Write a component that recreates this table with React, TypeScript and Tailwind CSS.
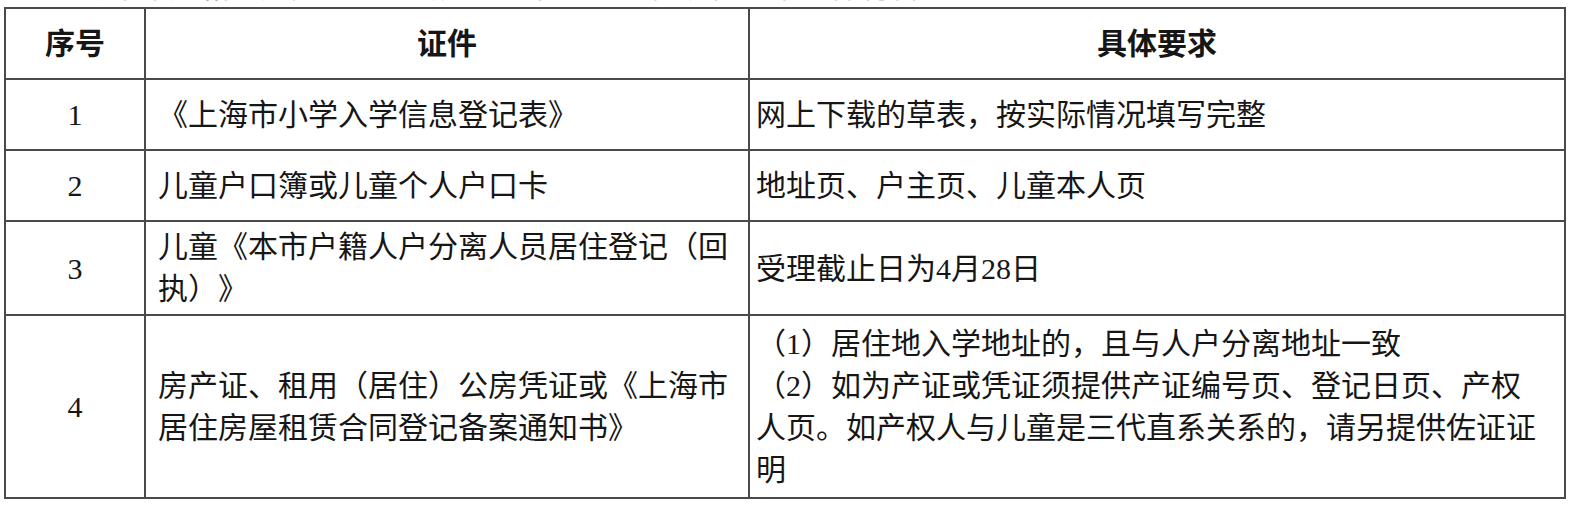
import React from "react";

const font = { fontFamily: '"Liberation Serif", "Noto Sans CJK SC", serif' };

function Cell({
  children,
  className = "",
}: {
  children: React.ReactNode;
  className?: string;
}) {
  return (
    <div
      className={
        "flex items-center border-r-2 border-b-2 border-[#4a4a4a] whitespace-nowrap " +
        className
      }
    >
      {children}
    </div>
  );
}

export default function App() {
  return (
    <div
      className="w-[1577px] h-[506px] bg-white text-[#161616] text-[30px] overflow-hidden [text-spacing-trim:space-all]"
      style={font}
    >
      <div className="h-[7px] overflow-hidden">
        <div className="mt-[-28px] ml-[20px] leading-[30px] whitespace-nowrap text-[#666]">
          二、持本市户籍人户分离的适龄儿童入学登记时需提供以下证件材料
        </div>
      </div>
      <div className="ml-[4px] w-[1562px] border-l-2 border-t-2 border-[#4a4a4a] grid grid-cols-[140px_604px_816px] grid-rows-[71px_71px_71px_94px_183px]">
        {/* header */}
        <Cell className="justify-center font-bold">序号</Cell>
        <Cell className="justify-center font-bold">证件</Cell>
        <Cell className="justify-center font-bold">具体要求</Cell>

        {/* row 1 */}
        <Cell className="justify-center">1</Cell>
        <Cell className="pl-[12px]">《上海市小学入学信息登记表》</Cell>
        <Cell className="pl-[6px]">网上下载的草表，按实际情况填写完整</Cell>

        {/* row 2 */}
        <Cell className="justify-center">2</Cell>
        <Cell className="pl-[12px]">儿童户口簿或儿童个人户口卡</Cell>
        <Cell className="pl-[6px]">地址页、户主页、儿童本人页</Cell>

        {/* row 3 */}
        <Cell className="justify-center">3</Cell>
        <Cell className="pl-[12px]">
          <div className="leading-[42px]">
            <div>儿童《本市户籍人户分离人员居住登记（回</div>
            <div>执）》</div>
          </div>
        </Cell>
        <Cell className="pl-[6px]">受理截止日为4月28日</Cell>

        {/* row 4 */}
        <Cell className="justify-center">4</Cell>
        <Cell className="pl-[12px]">
          <div className="leading-[42px]">
            <div>房产证、租用（居住）公房凭证或《上海市</div>
            <div>居住房屋租赁合同登记备案通知书》</div>
          </div>
        </Cell>
        <Cell className="pl-[6px]">
          <div className="leading-[42px]">
            <div>（1）居住地入学地址的，且与人户分离地址一致</div>
            <div>（2）如为产证或凭证须提供产证编号页、登记日页、产权</div>
            <div>人页。如产权人与儿童是三代直系关系的，请另提供佐证证</div>
            <div>明</div>
          </div>
        </Cell>
      </div>
    </div>
  );
}
